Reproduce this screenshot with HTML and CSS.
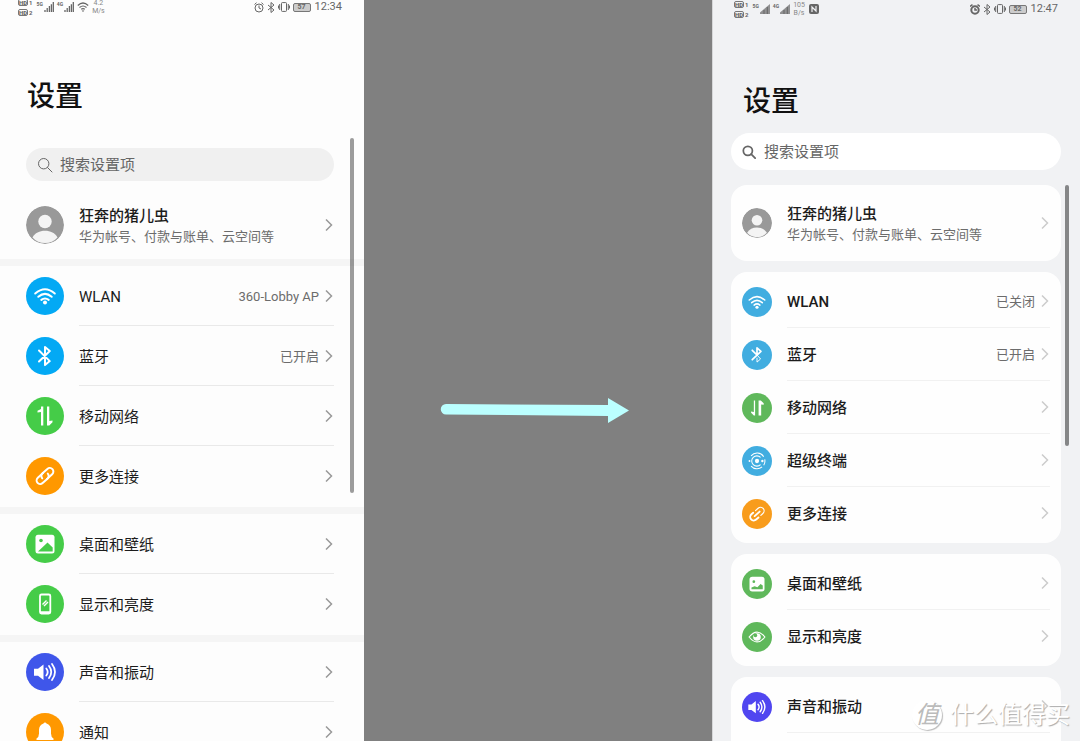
FILE: index.html
```html
<!DOCTYPE html>
<html lang="zh-CN">
<head>
<meta charset="utf-8">
<title>设置</title>
<link rel="stylesheet" href="styles.css">
</head>
<body>
<svg class="sprite" aria-hidden="true">
  <symbol id="chevron" viewBox="0 0 10 16"><path d="M2 2.500 7.500 8 2 13.500" fill="none" stroke="currentColor" stroke-width="1.500"/></symbol>
  <symbol id="search" viewBox="0 0 16 16"><circle cx="6.700" cy="6.700" r="5.200" fill="none" stroke="currentColor"/><path d="m10.500 10.500 4.500 4.500" stroke="currentColor" stroke-linecap="round"/></symbol>
  <symbol id="avatar" viewBox="0 0 38 38"><circle cx="19" cy="19" r="19" fill="#999"/><circle cx="19" cy="15.500" r="6.700" fill="#f4f4f4"/><path d="M6.500 31.500C9 27 13.500 24.800 19 24.800S29 27 31.500 31.500C28 35.300 24 37 19 37S10 35.300 6.500 31.500Z" fill="#f4f4f4"/></symbol>
  <symbol id="wifi" viewBox="0 0 38 38"><g fill="none" stroke="#fff" stroke-width="2" stroke-linecap="round"><path d="M9.200 16.500Q19 8 28.800 16.500"/><path d="M12.300 19.800Q19 14 25.700 19.800"/><path d="M15.300 22.900Q19 20 22.700 22.900"/></g><circle cx="19" cy="25.600" r="2" fill="#fff"/></symbol>
  <symbol id="bluetooth" viewBox="0 0 38 38"><path d="m13 13.500 10.800 10.600-4.800 4V10l4.800 4L13 24.500" fill="none" stroke="#fff" stroke-width="2" stroke-linejoin="round" stroke-linecap="round"/></symbol>
  <symbol id="bluetooth-off" viewBox="0 0 38 38"><g fill="none" stroke="#fff" stroke-linejoin="round" stroke-linecap="round"><path d="m13 13 6 6V10l5 4.500L13 25" stroke-width="2.200"/><path d="m19 19 4.500 5-4.500 4v-5" stroke-width="1.200"/></g></symbol>
  <symbol id="data" viewBox="0 0 38 38"><path d="M15 28.500V15l-3.500.5v-1.800L15 12V9.500h2.300v19ZM21 9.500h2.300V24l3.200-.5v1.800l-3.200 3.200H21Z" fill="#fff"/></symbol>
  <symbol id="data-alt" viewBox="0 0 38 38"><path d="M15 9.500h1.600v19H15l-3.500-3.500v-1.500l3.500.5ZM21 28.500v-19h2.800l3.700 3.500v2l-3.200-.5v14Z" fill="#fff"/></symbol>
  <symbol id="link" viewBox="0 0 38 38"><g transform="rotate(-42 19 19)" fill="none" stroke="#fff" stroke-width="2" stroke-linecap="round"><path d="M19.500 15.500h-7a3.600 3.600 0 0 0 0 7.200h6.500a3.600 3.600 0 0 0 3.600-3.600"/><path d="M18.500 22.500h7a3.600 3.600 0 0 0 0-7.200H19a3.600 3.600 0 0 0-3.600 3.600"/></g></symbol>
  <symbol id="link-open" viewBox="0 0 38 38"><g transform="rotate(-42 19 19)" fill="none" stroke="#fff" stroke-linecap="round"><path d="M16.500 14.500h-3a4.500 4.500 0 0 0 0 9h4M15 19h8.500" stroke-width="2.400"/><path d="M20.500 14.500H25a4.500 4.500 0 0 1 0 9h-3.500" stroke-width="1.500"/></g></symbol>
  <symbol id="picture" viewBox="0 0 38 38"><rect x="9.500" y="9.700" width="19" height="18.800" rx="2.500" fill="#fff"/><circle cx="15" cy="15.500" r="1.800" fill="currentColor"/><path d="m12 26.500 9.500-9 5.200 5v4Z" fill="currentColor"/></symbol>
  <symbol id="picture-alt" viewBox="0 0 38 38"><rect x="9.500" y="9.700" width="19" height="18.800" rx="3.500" fill="#fff"/><circle cx="15" cy="16" r="1.700" fill="currentColor"/><path d="M12 25.500v-2l4-1.500 3.500 1 4-4 2.800 2v4.500Z" fill="currentColor"/></symbol>
  <symbol id="phone" viewBox="0 0 38 38"><rect x="14" y="9.500" width="10.300" height="19" rx="1.500" fill="none" stroke="#fff" stroke-width="1.800"/><path d="M14 27.300h10.300" stroke="#fff" stroke-width="2"/><path d="M16.500 19.500l4-4M18 21l4-4" stroke="#fff" stroke-width="1.400"/></symbol>
  <symbol id="eye" viewBox="0 0 38 38"><path d="M9 19q10-12.500 20 0-10 12.500-20 0Z" fill="none" stroke="#fff" stroke-width="1.500"/><circle cx="19" cy="19" r="4.800" fill="#fff"/><circle cx="17" cy="17" r="2.300" fill="currentColor"/></symbol>
  <symbol id="target" viewBox="0 0 38 38"><g fill="none" stroke="#fff" stroke-width="1.300"><path d="M11.500 12.500A10 10 0 0 1 27.500 13.500M28.800 17a10 10 0 0 1-1.300 7.500M25.500 26.500a10 10 0 0 1-14-1"/><path d="M23.500 14.500a6.500 6.500 0 1 0 0 9"/></g><circle cx="19" cy="19" r="2.700" fill="#fff"/><circle cx="25.800" cy="19" r="1.500" fill="#fff"/><circle cx="9.500" cy="19" r="1.200" fill="#fff"/></symbol>
  <symbol id="sound" viewBox="0 0 38 38"><path d="M8 15.700h4l5.500-4.200v15.500l-5.500-4.200H8Z" fill="#fff"/><path d="M20.300 15.500q2.800 3.500 0 7M23 13q4.500 6 0 12M26 11q6 8 0 16" fill="none" stroke="#fff" stroke-width="1.800" stroke-linecap="round"/></symbol>
  <symbol id="bell" viewBox="0 0 38 38"><path d="M10.500 27v-1.500q2.500-1.500 2.500-5V17q0-5 4.500-6.500a1.600 1.600 0 0 1 3 0Q25 12 25 17v3.500q0 3.500 2.500 5V27Z" fill="#fff"/></symbol>
  <symbol id="bars" viewBox="0 0 10 10"><path d="M1 10V8M3.200 10V6M5.400 10V4M7.400 10V2.200M9.300 10V0" stroke="currentColor" stroke-width="1.300"/></symbol>
  <symbol id="bars-solid" viewBox="0 0 10 10"><path d="M0 10V8.500L10 0v10Z" fill="currentColor" opacity=".7"/><path d="M4 10V6M7.300 10V3" stroke="currentColor"/></symbol>
  <symbol id="st-wifi" viewBox="0 0 12 10"><path d="M.8 3.500Q6-1.500 11.200 3.500M2.500 5.500q3.500-3 7 0M4.200 7.300q1.800-1.500 3.600 0" fill="none" stroke="currentColor" stroke-width="1.200"/><path d="m6 10 1.400-1.600H4.600Z" fill="currentColor"/></symbol>
  <symbol id="st-alarm" viewBox="0 0 10 11"><circle cx="5" cy="6" r="4" fill="none" stroke="currentColor"/><path d="M5 3.500V6l2 1M.5 2.500 2.500.7M9.500 2.500 7.500.7" fill="none" stroke="currentColor"/></symbol>
  <symbol id="st-alarm-solid" viewBox="0 0 10 11"><circle cx="5" cy="6" r="3.700" fill="none" stroke="currentColor" stroke-width="2"/><path d="M5 4v2h2M0 2.500 2.500.7M10 2.500 7.500.7" fill="none" stroke="currentColor" stroke-width="1.500"/></symbol>
  <symbol id="st-bt" viewBox="0 0 8 11"><path d="m1 3 6 5-3 2.500V.5L7 3 1 8" fill="none" stroke="currentColor"/></symbol>
  <symbol id="st-vibrate" viewBox="0 0 12 10"><rect x="3.500" y=".6" width="5" height="8.800" rx=".8" fill="none" stroke="currentColor"/><path d="M1.700 2v6M10.300 2v6M.5 3.500v3M11.500 3.500v3" stroke="currentColor"/></symbol>
  <symbol id="nfc" viewBox="0 0 10 10"><rect width="10" height="10" rx="2" fill="currentColor"/><path d="M3 8V3l4 4V2" fill="none" stroke="#f1f2f4" stroke-width="1.200"/></symbol>
</svg>

<main class="compare">
  <section class="phone phone-old">
    <div class="status">
      <div class="hd"><span><b>HD</b>1</span><span><b>HD</b>2</span></div>
      <div class="signal"><small>5G</small><svg class="s-bars"><use href="#bars"/></svg></div>
      <div class="signal"><small>4G</small><svg class="s-bars"><use href="#bars"/></svg></div>
      <svg class="s-wifi"><use href="#st-wifi"/></svg>
      <div class="speed"><span>4.2</span><span>M/s</span></div>
      <div class="status-end">
        <svg class="s-alarm"><use href="#st-alarm"/></svg>
        <svg class="s-bt"><use href="#st-bt"/></svg>
        <svg class="s-vibrate"><use href="#st-vibrate"/></svg>
        <span class="battery">57</span>
        <time>12:34</time>
      </div>
    </div>
    <h1>设置</h1>
    <label class="search"><svg><use href="#search"/></svg><input type="search" placeholder="搜索设置项" aria-label="搜索设置项"></label>
    <a class="row account" href="#account"><svg class="icon"><use href="#avatar"/></svg><span class="who"><strong>狂奔的猪儿虫</strong><small>华为帐号、付款与账单、云空间等</small></span><svg class="chev"><use href="#chevron"/></svg></a>
    <nav class="group">
      <a class="row" href="#wlan"><svg class="icon azure"><use href="#wifi"/></svg><span class="cell"><span>WLAN</span><em>360-Lobby AP</em><svg class="chev"><use href="#chevron"/></svg></span></a>
      <a class="row" href="#bt"><svg class="icon azure"><use href="#bluetooth"/></svg><span class="cell"><span>蓝牙</span><em>已开启</em><svg class="chev"><use href="#chevron"/></svg></span></a>
      <a class="row" href="#mobile"><svg class="icon green"><use href="#data"/></svg><span class="cell"><span>移动网络</span><svg class="chev"><use href="#chevron"/></svg></span></a>
      <a class="row" href="#more"><svg class="icon orange"><use href="#link"/></svg><span class="cell"><span>更多连接</span><svg class="chev"><use href="#chevron"/></svg></span></a>
    </nav>
    <nav class="group">
      <a class="row" href="#desktop"><svg class="icon green"><use href="#picture"/></svg><span class="cell"><span>桌面和壁纸</span><svg class="chev"><use href="#chevron"/></svg></span></a>
      <a class="row" href="#display"><svg class="icon green"><use href="#phone"/></svg><span class="cell"><span>显示和亮度</span><svg class="chev"><use href="#chevron"/></svg></span></a>
    </nav>
    <nav class="group">
      <a class="row" href="#sound-old"><svg class="icon blue"><use href="#sound"/></svg><span class="cell"><span>声音和振动</span><svg class="chev"><use href="#chevron"/></svg></span></a>
      <a class="row" href="#notify"><svg class="icon orange"><use href="#bell"/></svg><span class="cell"><span>通知</span><svg class="chev"><use href="#chevron"/></svg></span></a>
    </nav>
    <div class="thumb"></div>
  </section>

  <div class="between">
    <svg class="arrow" viewBox="0 0 190 26" role="img" aria-label="升级为"><path d="M6 6 168 7V0l21 12.500L168 25v-7L6 16.500A5 5 0 0 1 6 6Z" fill="#bff"/></svg>
  </div>

  <section class="phone phone-new">
    <div class="status">
      <div class="hd"><span><b>HD</b>1</span><span><b>HD</b>2</span></div>
      <div class="signal"><small>5G</small><svg class="s-bars"><use href="#bars-solid"/></svg></div>
      <div class="signal"><small>4G</small><svg class="s-bars"><use href="#bars-solid"/></svg></div>
      <div class="speed"><span>105</span><span>B/s</span></div>
      <svg class="s-nfc"><use href="#nfc"/></svg>
      <div class="status-end">
        <svg class="s-alarm"><use href="#st-alarm-solid"/></svg>
        <svg class="s-bt"><use href="#st-bt"/></svg>
        <svg class="s-vibrate"><use href="#st-vibrate"/></svg>
        <span class="battery">52</span>
        <time>12:47</time>
      </div>
    </div>
    <h1>设置</h1>
    <label class="search"><svg><use href="#search"/></svg><input type="search" placeholder="搜索设置项" aria-label="搜索设置项"></label>
    <div class="cards">
      <a class="row account" href="#account-new"><svg class="icon"><use href="#avatar"/></svg><span class="who"><strong>狂奔的猪儿虫</strong><small>华为帐号、付款与账单、云空间等</small></span><svg class="chev"><use href="#chevron"/></svg></a>
      <nav class="group">
        <a class="row" href="#wlan-new"><svg class="icon azure"><use href="#wifi"/></svg><span class="cell"><span>WLAN</span><em>已关闭</em><svg class="chev"><use href="#chevron"/></svg></span></a>
        <a class="row" href="#bt-new"><svg class="icon azure"><use href="#bluetooth-off"/></svg><span class="cell"><span>蓝牙</span><em>已开启</em><svg class="chev"><use href="#chevron"/></svg></span></a>
        <a class="row" href="#mobile-new"><svg class="icon green"><use href="#data-alt"/></svg><span class="cell"><span>移动网络</span><svg class="chev"><use href="#chevron"/></svg></span></a>
        <a class="row" href="#super"><svg class="icon azure"><use href="#target"/></svg><span class="cell"><span>超级终端</span><svg class="chev"><use href="#chevron"/></svg></span></a>
        <a class="row" href="#more-new"><svg class="icon orange"><use href="#link-open"/></svg><span class="cell"><span>更多连接</span><svg class="chev"><use href="#chevron"/></svg></span></a>
      </nav>
      <nav class="group">
        <a class="row" href="#desktop-new"><svg class="icon green"><use href="#picture-alt"/></svg><span class="cell"><span>桌面和壁纸</span><svg class="chev"><use href="#chevron"/></svg></span></a>
        <a class="row" href="#display-new"><svg class="icon green"><use href="#eye"/></svg><span class="cell"><span>显示和亮度</span><svg class="chev"><use href="#chevron"/></svg></span></a>
      </nav>
      <nav class="group open">
        <a class="row" href="#sound-new"><svg class="icon blue"><use href="#sound"/></svg><span class="cell"><span>声音和振动</span><svg class="chev"><use href="#chevron"/></svg></span></a>
      </nav>
    </div>
    <div class="thumb"></div>
    <div class="watermark"><span class="seal">值</span><span>什么值得买</span></div>
  </section>
</main>
</body>
</html>
```
FILE: styles.css
```css
* { box-sizing: border-box; }

body {
  margin: 0;
  font-family: Roboto, "Noto Sans CJK SC", sans-serif;
  color: #1c1c1c;
}

.sprite { position: absolute; width: 0; height: 0; }

.compare {
  display: grid;
  grid-template-columns: 364fr 348fr 368fr;
  grid-template-rows: 100%;
  height: 100vh;
  overflow: hidden;
}

.phone {
  position: relative;
  min-width: 0;
  overflow: hidden;
}
.phone-old { background: #fdfdfd; }
.phone-new {
  display: flex;
  flex-direction: column;
  background: #f1f2f4;
  border-left: 1px solid #d6d7d8;
}

.between {
  display: flex;
  align-items: center;
  justify-content: center;
  background: #808080;
  padding: 80px 6px 0 0;
}
.arrow { width: 190px; height: 26px; }

/* status bar */
.status {
  display: flex;
  flex: none;
  align-items: center;
  height: 14px;
  padding: 0 22px 0 18px;
  color: #666;
}
.phone-new .status { height: 18px; padding: 0 22px 0 21px; }
.hd {
  display: flex;
  flex-direction: column;
  gap: 3px;
  margin-right: 4px;
}
.hd span { display: flex; align-items: center; gap: 1px; font-size: 6px; line-height: 7px; font-weight: 700; }
.hd b { border: 1px solid #777; border-radius: 2px; line-height: 5px; }
.signal { display: flex; align-items: flex-start; gap: 1px; margin-right: 3px; }
.signal small { font-size: 5px; line-height: 5px; font-weight: 700; }
.s-bars { width: 10px; height: 10px; }
.s-wifi { width: 12px; height: 10px; margin-right: 3px; }
.s-nfc { width: 10px; height: 10px; margin-left: 4px; }
.speed { display: flex; flex-direction: column; align-items: center; font-size: 7px; line-height: 8px; color: #888; }
.status-end { display: flex; align-items: center; gap: 3px; margin-left: auto; }
.s-alarm { width: 10px; height: 11px; }
.s-bt { width: 8px; height: 11px; }
.s-vibrate { width: 12px; height: 10px; }
.battery {
  width: 18px;
  margin-right: 1px;
  border: 1px solid #777;
  border-radius: 2px;
  background: #ccc;
  font-size: 7px;
  line-height: 7px;
  font-weight: 700;
  text-align: center;
}
.status time { font-size: 11px; line-height: 14px; }

/* heading and search */
h1 {
  margin: 62px 0 31px 27px;
  font-size: 28px;
  line-height: 41px;
  font-weight: 500;
  color: #111;
}
.phone-new h1 { margin: 63px 0 11px 30px; }

.search {
  display: flex;
  flex: none;
  align-items: center;
  gap: 7px;
  height: 33px;
  margin: 0 30px 10px 26px;
  padding: 0 12px 0 11px;
  border-radius: 20px;
  background: #f0f0f0;
  color: #666;
}
.search svg { flex: none; width: 16px; height: 16px; }
.search input {
  flex: 1;
  min-width: 0;
  padding: 0;
  border: 0;
  outline: 0;
  background: none;
  font: inherit;
  font-size: 15px;
  line-height: 22px;
}
.search input::placeholder { color: #666; opacity: 1; }
.phone-new .search { height: 37px; margin: 0 19px 15px 18px; gap: 8px; background: #fff; }
.phone-new .search svg { width: 14px; height: 14px; stroke-width: 2px; }

/* rows */
.row {
  display: flex;
  align-items: center;
  gap: 15px;
  height: 60px;
  padding: 0 30px 0 26px;
  color: inherit;
  text-decoration: none;
}
.icon { flex: none; width: 38px; height: 38px; border-radius: 50%; }
.chev { flex: none; width: 10px; height: 16px; color: #999; }
.cell {
  flex: 1;
  display: flex;
  align-items: center;
  gap: 5px;
  height: 100%;
  border-bottom: 1px solid #e9e9e9;
  font-size: 15px;
  line-height: 22px;
}
.cell > span { flex: 1; padding-top: 2px; }
.row:last-child .cell { border-bottom-color: transparent; }
.cell em { padding-top: 2px; font-style: normal; font-size: 13px; color: #6c6c6c; }
.account { height: 68px; }
.who { flex: 1; display: flex; flex-direction: column; padding-top: 2px; }
.who strong { font-size: 15px; line-height: 22px; font-weight: 500; }
.who small { font-size: 13px; line-height: 20px; color: #6c6c6c; white-space: nowrap; }

.phone-old .group { border-top: 7px solid #f5f5f5; padding-bottom: 1px; }

.azure { background: #03a9f4; color: #03a9f4; }
.green { background: #45cc48; color: #45cc48; }
.orange { background: #ff9800; color: #ff9800; }
.blue { background: #3f56ea; color: #3f56ea; }

/* card layout */
.cards { flex: 1; display: flex; flex-direction: column; gap: 11px; min-height: 0; margin: 0 19px 0 18px; }
.cards > * { flex: none; background: #fefefe; border-radius: 16px; }
.cards > .open { flex: 1; border-radius: 16px 16px 0 0; }
.cards .group { padding: 3px 0; }
.cards .row { height: 53px; padding: 0 11px; }
.cards .account { height: 76px; }
.cards .icon { width: 30px; height: 30px; }
.cards .chev { color: #ccc; }
.cards .cell { font-weight: 500; border-bottom-color: #f1f1f1; }
.cards .row:last-child .cell { border-bottom-color: transparent; }
.cards .open .row:last-child .cell { border-bottom-color: #f1f1f1; }
.cards em { font-weight: 400; }
.cards .azure { background: #41ade0; color: #41ade0; }
.cards .green { background: #5fb85b; color: #5fb85b; }
.cards .orange { background: #f89c1c; color: #f89c1c; }
.cards .blue { background: #5046f0; color: #5046f0; }

/* scroll thumbs lie over the lists */
.thumb { position: absolute; width: 4px; border-radius: 2px; background: rgba(60, 60, 60, .5); }
.phone-old .thumb { top: 138px; right: 10px; height: 355px; }
.phone-new .thumb { top: 185px; right: 11px; height: 261px; background: #858687; }

.watermark {
  position: absolute;
  right: 10px;
  bottom: 10px;
  display: flex;
  align-items: center;
  gap: 8px;
  font-size: 24px;
  line-height: 32px;
  color: #fff;
  text-shadow: 1px 1px 1px #aaa;
}
.seal {
  width: 30px;
  height: 30px;
  border-radius: 50%;
  background: #fff;
  box-shadow: 1px 1px 1px #bbb;
  color: #bbb;
  line-height: 30px;
  text-align: center;
  text-shadow: none;
  font-style: italic;
}
```
